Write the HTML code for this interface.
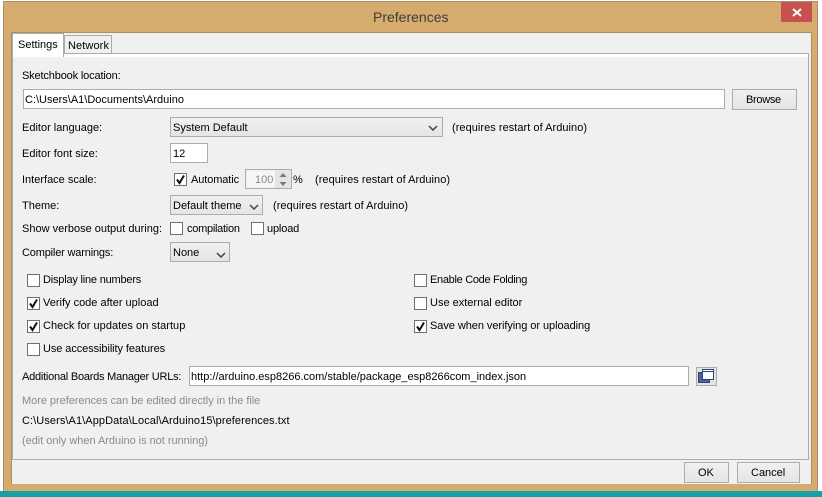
<!DOCTYPE html>
<html><head><meta charset="utf-8"><style>
html,body{margin:0;padding:0;background:#fff}
#r{position:relative;width:822px;height:497px;overflow:hidden;background:#fff;font-family:"Liberation Sans",sans-serif;font-size:11px;color:#000}
#r div{position:absolute;box-sizing:border-box}
.t{white-space:nowrap;line-height:14px;height:14px;margin-top:1px}
#r .g{color:#8a8a8a}
.i{background:#fff;border:1px solid #acacac}
.b{border:1px solid #acacac;background:linear-gradient(#f0f0f0,#e5e5e5)}
.c{width:13px;height:13px;background:#fff;border:1px solid #707070}
.c svg{position:absolute;left:0;top:0}
.a{width:10px;height:6px}
svg{display:block}
</style></head><body><div id="r">
<div style="left:3px;top:1px;width:815px;height:490px;background:#d6ac6e;border:1px solid #a98f68;border-bottom:none"></div>
<div style="left:0;top:491px;width:822px;height:6px;background:#17a1a5"></div>
<div class="t" style="left:373px;top:9px;margin-top:0;font-size:14px;line-height:17px;height:17px;color:#3c3c3c">Preferences</div>
<div style="left:781px;top:2px;width:31px;height:20px;background:#c75050"></div>
<svg style="position:absolute;left:792px;top:8px" width="10" height="9"><path d="M1 1L9 8M9 1L1 8" stroke="#fff" stroke-width="2"/></svg>
<div style="left:11px;top:32px;width:801px;height:452px;background:#f0f0f0;border:1px solid #a98f68;border-bottom:none"></div>
<div style="left:12px;top:53px;width:797px;height:407px;background:#f0f0f0;border:1px solid #acacac"></div>
<div style="left:13px;top:54px;width:795px;height:3px;background:#fff"></div>
<div style="left:64px;top:35px;width:48px;height:19px;background:#f0f0f0;border:1px solid #acacac"></div>
<div style="left:12px;top:33px;width:52px;height:24px;background:#fff;border:1px solid #acacac;border-bottom:none"></div>
<div class="t" style="left:18px;top:37px">Settings</div>
<div class="t" style="left:68px;top:38px;letter-spacing:.1px">Network</div>

<div class="t" style="left:22px;top:68px;letter-spacing:-.15px">Sketchbook location:</div>
<div class="i" style="left:23px;top:89px;width:702px;height:20px"></div>
<div class="t" style="left:25px;top:92px">C:\Users\A1\Documents\Arduino</div>
<div class="b" style="left:732px;top:89px;width:65px;height:21px"></div>
<div class="t" style="left:746px;top:92px;letter-spacing:-.3px">Browse</div>

<div class="t" style="left:22px;top:120px">Editor language:</div>
<div class="b" style="left:170px;top:117px;width:273px;height:20px"></div>
<div class="t" style="left:173px;top:120px">System Default</div>
<svg class="a" style="position:absolute;left:428px;top:125px" width="10" height="6"><path d="M1 1L5 5L9 1" fill="none" stroke="#444" stroke-width="1.500"/></svg>
<div class="t" style="left:452px;top:120px;letter-spacing:.04px">(requires restart of Arduino)</div>

<div class="t" style="left:22px;top:146px">Editor font size:</div>
<div class="i" style="left:170px;top:143px;width:38px;height:20px"></div>
<div class="t" style="left:173px;top:146px">12</div>

<div class="t" style="left:22px;top:172px">Interface scale:</div>
<div class="c" style="left:174px;top:173px"><svg width="11" height="11"><path d="M2 5.500L4.500 9L9 1.500" fill="none" stroke="#111" stroke-width="2"/></svg></div>
<div class="t" style="left:191px;top:172px;letter-spacing:-.1px">Automatic</div>
<div style="left:245px;top:169px;width:47px;height:20px;background:#f0f0f0;border:1px solid #acacac"></div>
<div style="left:247px;top:171px;width:28px;height:16px;background:#f6f6f6"></div>
<div class="t g" style="left:255px;top:172px">100</div>
<div style="left:275px;top:170px;width:16px;height:18px;background:#e4e4e4"></div>
<svg style="position:absolute;left:278px;top:172px" width="10" height="15"><path d="M5 1L8.500 5H1.500Z" fill="#777"/><path d="M1.500 10H8.500L5 14Z" fill="#777"/></svg>
<div class="t" style="left:293px;top:172px">%</div>
<div class="t" style="left:315px;top:172px;letter-spacing:.04px">(requires restart of Arduino)</div>

<div class="t" style="left:22px;top:198px">Theme:</div>
<div class="b" style="left:170px;top:195px;width:93px;height:20px"></div>
<div class="t" style="left:173px;top:198px">Default theme</div>
<svg class="a" style="position:absolute;left:249px;top:204px" width="10" height="6"><path d="M1 1L5 5L9 1" fill="none" stroke="#444" stroke-width="1.500"/></svg>
<div class="t" style="left:273px;top:198px;letter-spacing:.04px">(requires restart of Arduino)</div>

<div class="t" style="left:22px;top:221px">Show verbose output during:</div>
<div class="c" style="left:170px;top:222px"></div>
<div class="t" style="left:187px;top:221px;letter-spacing:-.27px">compilation</div>
<div class="c" style="left:251px;top:222px"></div>
<div class="t" style="left:267px;top:221px;letter-spacing:-.15px">upload</div>

<div class="t" style="left:22px;top:245px;letter-spacing:-.17px">Compiler warnings:</div>
<div class="b" style="left:170px;top:242px;width:60px;height:20px"></div>
<div class="t" style="left:173px;top:245px">None</div>
<svg class="a" style="position:absolute;left:216px;top:252px" width="10" height="6"><path d="M1 1L5 5L9 1" fill="none" stroke="#444" stroke-width="1.500"/></svg>

<div class="c" style="left:27px;top:274px"></div>
<div class="t" style="left:43px;top:272px;letter-spacing:-.2px">Display line numbers</div>
<div class="c" style="left:27px;top:297px"><svg width="11" height="11"><path d="M2 5.500L4.500 9L9 1.500" fill="none" stroke="#111" stroke-width="2"/></svg></div>
<div class="t" style="left:43px;top:295px">Verify code after upload</div>
<div class="c" style="left:27px;top:320px"><svg width="11" height="11"><path d="M2 5.500L4.500 9L9 1.500" fill="none" stroke="#111" stroke-width="2"/></svg></div>
<div class="t" style="left:43px;top:318px;letter-spacing:.04px">Check for updates on startup</div>
<div class="c" style="left:27px;top:343px"></div>
<div class="t" style="left:43px;top:341px;letter-spacing:-.08px">Use accessibility features</div>

<div class="c" style="left:414px;top:274px"></div>
<div class="t" style="left:430px;top:272px;letter-spacing:-.3px">Enable Code Folding</div>
<div class="c" style="left:414px;top:297px"></div>
<div class="t" style="left:430px;top:295px">Use external editor</div>
<div class="c" style="left:414px;top:320px"><svg width="11" height="11"><path d="M2 5.500L4.500 9L9 1.500" fill="none" stroke="#111" stroke-width="2"/></svg></div>
<div class="t" style="left:430px;top:318px;letter-spacing:-.06px">Save when verifying or uploading</div>

<div class="t" style="left:22px;top:369px;letter-spacing:-.23px">Additional Boards Manager URLs:</div>
<div class="i" style="left:189px;top:366px;width:500px;height:20px"></div>
<div class="t" style="left:191px;top:369px">http://arduino.esp8266.com/stable/package_esp8266com_index.json</div>
<div style="left:696px;top:367px;width:21px;height:19px;background:#e4e4e4;border:1px solid #acacac"></div>
<svg style="position:absolute;left:698px;top:369px" width="17" height="15"><rect x="0.500" y="3.500" width="11" height="10" fill="#4a6595" stroke="#2d4475"/><rect x="4.500" y="0.500" width="11" height="10" fill="#fff" stroke="#2d4475"/><rect x="4" y="2" width="12" height="1" fill="#2d4475"/></svg>

<div class="t g" style="left:22px;top:393px;letter-spacing:-.04px">More preferences can be edited directly in the file</div>
<div class="t" style="left:22px;top:413px;letter-spacing:.08px">C:\Users\A1\AppData\Local\Arduino15\preferences.txt</div>
<div class="t g" style="left:22px;top:433px;letter-spacing:-.03px">(edit only when Arduino is not running)</div>

<div class="b" style="left:684px;top:462px;width:45px;height:21px"></div>
<div class="t" style="left:698px;top:465px">OK</div>
<div class="b" style="left:737px;top:462px;width:63px;height:21px"></div>
<div class="t" style="left:751px;top:465px">Cancel</div>
</div></body></html>
